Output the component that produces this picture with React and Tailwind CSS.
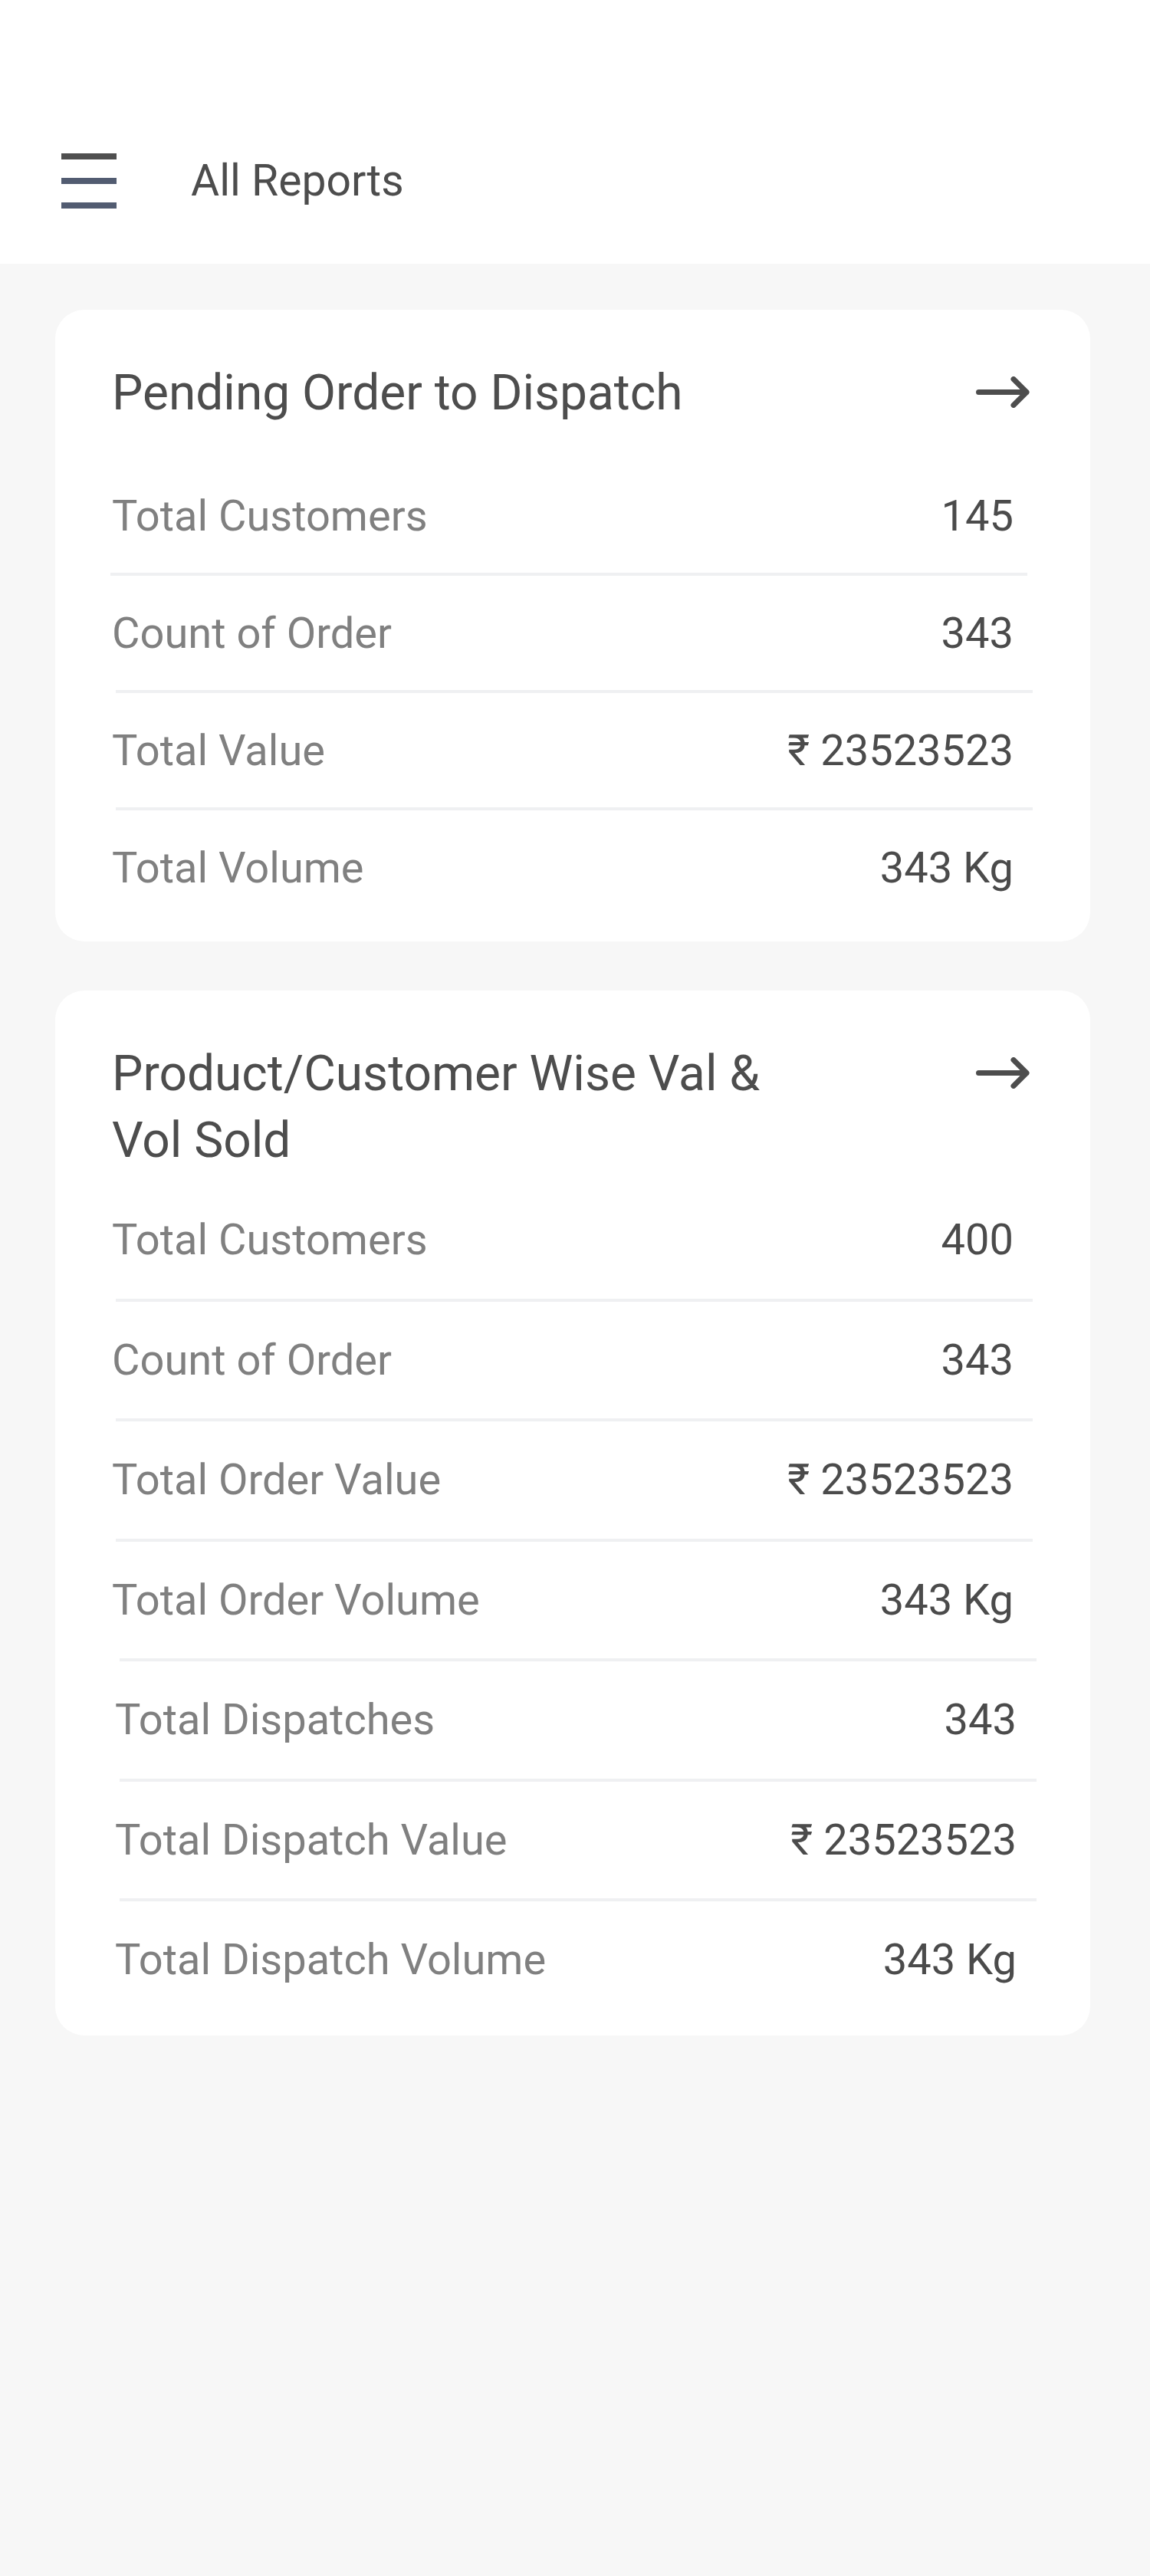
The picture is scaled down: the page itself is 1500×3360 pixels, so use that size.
import React from "react";

const pending = {
  title: "Pending Order to Dispatch",
  titleGap: "mb-[42px]",
  rowHeight: "h-[149px]",
  rows: [
    { label: "Total Customers", value: "145", line: "ml-[-2px]" },
    { label: "Count of Order", value: "343", line: "ml-[5px]" },
    { label: "Total Value", value: "₹ 23523523", line: "ml-[5px]" },
    { label: "Total Volume", value: "343 Kg" },
  ],
};

const productWise = {
  title: "Product/Customer Wise Val & Vol Sold",
  titleGap: "mb-[10px]",
  rowHeight: "h-[152.5px]",
  rows: [
    { label: "Total Customers", value: "400", line: "ml-[5px]" },
    { label: "Count of Order", value: "343", line: "ml-[5px]" },
    { label: "Total Order Value", value: "₹ 23523523", line: "ml-[5px]" },
    { label: "Total Order Volume", value: "343 Kg", line: "ml-[10px]" },
    { label: "Total Dispatches", value: "343", line: "ml-[10px]", shift: true },
    { label: "Total Dispatch Value", value: "₹ 23523523", line: "ml-[10px]", shift: true },
    { label: "Total Dispatch Volume", value: "343 Kg", shift: true },
  ],
};

function ArrowRight() {
  return (
    <svg width="70" height="41" viewBox="0 0 70 41" fill="none" className="mt-[22px] shrink-0">
      <path
        d="M3.5 20.5H66M49 3.5L66 20.5L49 37.5"
        stroke="#4d4d4d"
        strokeWidth="7"
        strokeLinecap="round"
        strokeLinejoin="round"
      />
    </svg>
  );
}

function ReportCard({ report }) {
  return (
    <div className="ml-[72px] w-[1350px] rounded-[38px] bg-white pl-[74px] pt-[65px] pb-[22px]">
      {/* Title row */}
      <div className={`flex w-[1197px] items-start justify-between ${report.titleGap}`}>
        <div className="max-w-[900px] text-[64px] leading-[87px] text-[#4d4d4d]">{report.title}</div>
        <ArrowRight />
      </div>

      {report.rows.map((row, i) => (
        <div key={i}>
          <div
            className={`flex w-[1176px] items-center justify-between ${report.rowHeight} ${
              row.shift ? "ml-[4px]" : ""
            }`}
          >
            <span className="text-[56px] leading-[66px] text-[#808080]">{row.label}</span>
            <span className="text-[56px] leading-[66px] text-[#4b4b4b]">{row.value}</span>
          </div>
          {row.line && <div className={`h-[4px] w-[1196px] bg-[#eff0f2] ${row.line}`} />}
        </div>
      ))}
    </div>
  );
}

export default function App() {
  return (
    <div className="min-h-[3360px] bg-[#f7f7f7] font-[Roboto,sans-serif]">
      {/* Header */}
      <header className="h-[344px] bg-white pt-[200px] pl-[80px]">
        <div className="flex items-center">
          <div className="flex h-[72px] w-[72px] flex-col justify-between">
            <div className="h-[8px] w-full bg-[#4f4f4f]" />
            <div className="h-[8px] w-full bg-[#525c71]" />
            <div className="h-[8px] w-full bg-[#525c71]" />
          </div>
          <div className="ml-[97px] text-[57px] leading-[72px] text-[#4d4d4d]">All Reports</div>
        </div>
      </header>

      <main className="flex flex-col gap-[64px] pt-[60px]">
        <ReportCard report={pending} />
        <ReportCard report={productWise} />
      </main>
    </div>
  );
}
